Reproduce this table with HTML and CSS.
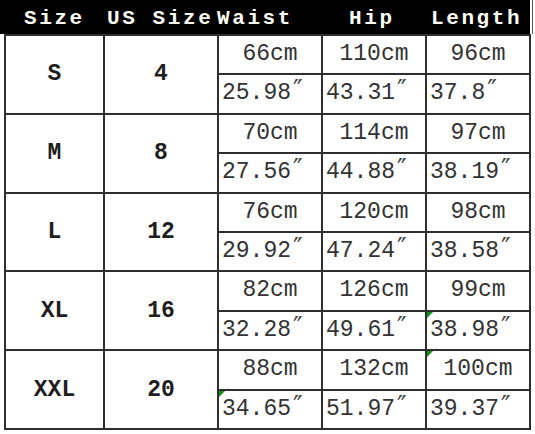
FILE: index.html
```html
<!DOCTYPE html>
<html>
<head>
<meta charset="utf-8">
<link rel="stylesheet" href="styles.css">
</head>
<body>
<div class="chart">
  <div class="head">
    <div class="h">Size</div>
    <div class="h">US Size</div>
    <div class="h">Waist</div>
    <div class="h">Hip</div>
    <div class="h">Length</div>
  </div>
  <div class="grid">
    <div class="lab">S</div><div class="lab">4</div>
    <div class="cm">66cm</div><div class="cm">110cm</div><div class="cm">96cm</div>
    <div class="in">25.98<span class="q">″</span></div><div class="in">43.31<span class="q">″</span></div><div class="in">37.8<span class="q">″</span></div>

    <div class="lab">M</div><div class="lab">8</div>
    <div class="cm">70cm</div><div class="cm">114cm</div><div class="cm">97cm</div>
    <div class="in">27.56<span class="q">″</span></div><div class="in">44.88<span class="q">″</span></div><div class="in">38.19<span class="q">″</span></div>

    <div class="lab">L</div><div class="lab">12</div>
    <div class="cm">76cm</div><div class="cm">120cm</div><div class="cm">98cm</div>
    <div class="in">29.92<span class="q">″</span></div><div class="in">47.24<span class="q">″</span></div><div class="in">38.58<span class="q">″</span></div>

    <div class="lab">XL</div><div class="lab">16</div>
    <div class="cm">82cm</div><div class="cm">126cm</div><div class="cm">99cm</div>
    <div class="in">32.28<span class="q">″</span></div><div class="in">49.61<span class="q">″</span></div><div class="in flag">38.98<span class="q">″</span></div>

    <div class="lab">XXL</div><div class="lab">20</div>
    <div class="cm">88cm</div><div class="cm">132cm</div><div class="cm flag">100cm</div>
    <div class="in flag">34.65<span class="q">″</span></div><div class="in">51.97<span class="q">″</span></div><div class="in">39.37<span class="q">″</span></div>
  </div>
</div>
</body>
</html>
```
FILE: styles.css
```css
html, body {
  margin: 0;
  padding: 0;
  background: #fff;
}
.chart {
  width: 535px;
  height: 434px;
}
.head {
  width: 530px;
  height: 34px;
  background: #000;
  display: grid;
  grid-template-columns: 83px 110px 132px 82px 1fr;
  padding-left: 24px;
  box-sizing: border-box;
  font-family: "Liberation Mono", "DejaVu Sans Mono", monospace;
  font-weight: bold;
  font-size: 21px;
  letter-spacing: 2.6px;
  line-height: 34px;
  color: #fdfdf6;
  white-space: nowrap;
  box-shadow: 2px 0 0 0 #fff, 3px 0 0 0 #555;
}
.h {
  padding-top: 2px;
}
.grid {
  margin-left: 4px;
  width: 527px;
  box-sizing: border-box;
  display: grid;
  grid-template-columns: 97px 112px 102px 102px 102px;
  grid-auto-rows: 37.4px;
  gap: 2px;
  padding: 2px;
  background: #2e2e2e;
  font-family: "Liberation Mono", "DejaVu Sans Mono", monospace;
  white-space: nowrap;
}
.grid > div {
  background: #fff;
  position: relative;
}
.lab {
  grid-row: span 2;
  display: flex;
  align-items: center;
  justify-content: center;
  font-weight: bold;
  font-size: 23px;
  color: #1e1e1e;
}
.lab:nth-child(8n+1) {
  grid-column: 1;
}
.lab:nth-child(8n+2) {
  grid-column: 2;
}
.cm, .in {
  font-size: 23px;
  line-height: 37.4px;
  color: #333;
  overflow: hidden;
}
.cm {
  text-align: center;
}
.in {
  text-align: left;
  padding-left: 3px;
}
.q {
  font-family: "DejaVu Sans", sans-serif;
  font-size: 26px;
  line-height: 0;
  padding-left: 2px;
  color: #444;
}
.flag::before {
  content: "";
  position: absolute;
  left: 0;
  top: 0;
  width: 0;
  height: 0;
  border-top: 6px solid #12901a;
  border-right: 6px solid transparent;
}
```
